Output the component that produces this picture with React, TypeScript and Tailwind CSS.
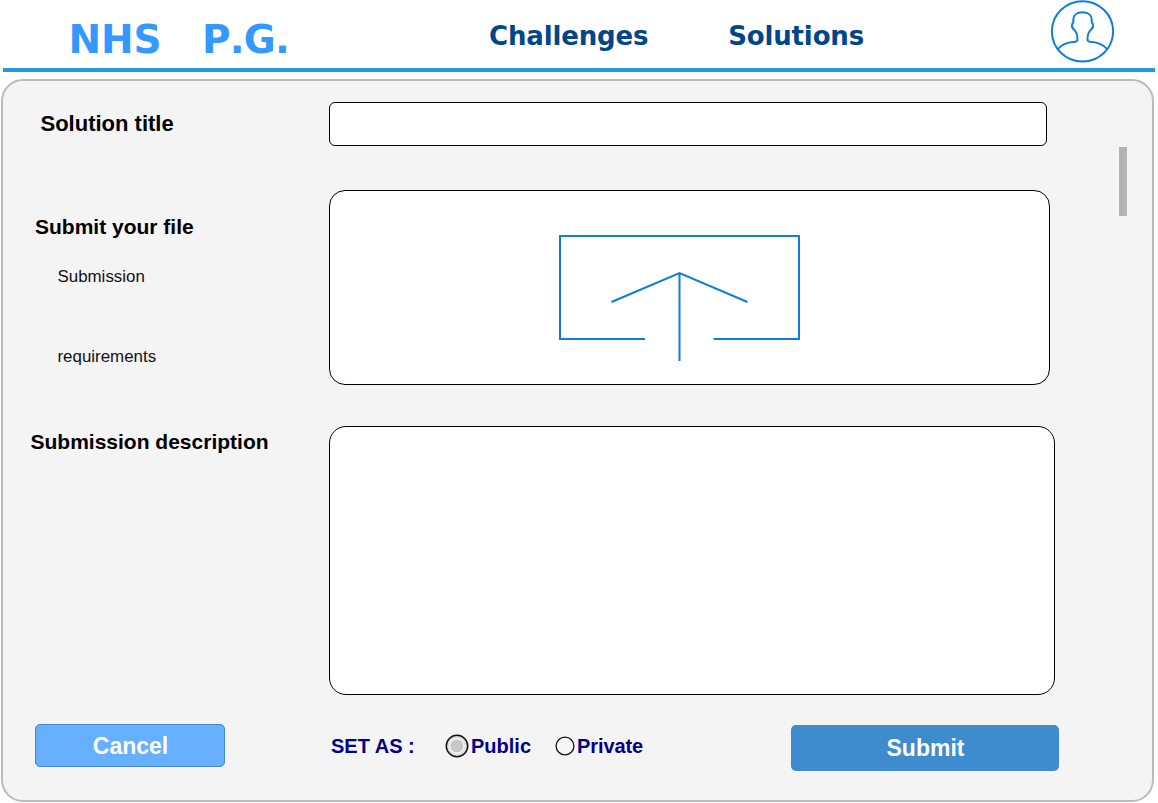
const stroke = "#0f7ddb";

function UserIcon() {
  return (
    <svg width="64" height="64" viewBox="0 0 64 64" fill="none" stroke={stroke} strokeWidth="2" strokeLinejoin="round">
      <ellipse cx="32.5" cy="31.4" rx="30.6" ry="30.2" />
      <path d="M7.8 49.2C11.500 44.500 18 42 25.5 41.7Q27.3 41.6 27.4 39.8V37C27.4 34 26.400 32.400 24.600 30.200C22.3 28.500 21.5 26 22.400 23.500L23.300 22.5V19.5C23.3 15 27 12.3 32.5 12.3C38 12.3 41.7 15 41.7 19.5V22.5L42.6 23.500C43.5 26 42.7 28.500 40.4 30.200C38.6 32.400 37.6 34 37.6 37V39.8Q37.7 41.6 39.5 41.7C47 42 53.500 44.500 57.2 49.2" />
    </svg>
  );
}

function UploadIcon() {
  return (
    <svg width="242" height="128" viewBox="0 0 242 128" fill="none" stroke={stroke} strokeWidth="2">
      <path d="M87 105H2V2H241V105H155.500" />
      <path d="M53.500 68L121.500 39L189.500 68M121.500 39V127" />
    </svg>
  );
}

function Header() {
  return (
    <header className="ml-[3px] flex h-[72px] w-[1152px] border-b-4 border-[#219bdc] font-['DejaVu_Sans',sans-serif] font-bold">
      <div className="w-[486px] whitespace-pre pl-[65.500px] pt-[17px] text-[39px] leading-[46px] tracking-[-0.100px] text-[#3399ff] [font-kerning:none]">NHS   <span className="tracking-[-0.800px]">P.G.</span></div>
      <nav className="flex grow gap-[80px] pt-[21px] text-[26px] leading-[30px] tracking-[-0.160px] text-[#004688]">
        <a>Challenges</a>
        <a>Solutions</a>
      </nav>
      <div className="w-[105px]">
        <UserIcon />
      </div>
    </header>
  );
}

export default function App() {
  return (
    <div className="h-[803px] w-[1158px] overflow-hidden bg-white font-['Liberation_Sans',Arial,sans-serif] text-black">
      <Header />
      <main className="ml-px mt-[7px] flex h-[723px] w-[1153px] rounded-[22px] border-2 border-[#bbbbbb] bg-[#f4f4f4]">
        <form className="flex w-[1116px] flex-col pt-[21px]" onSubmit={(e) => e.preventDefault()}>
          <div className="flex h-[88px]">
            <label className="w-[326px] pl-[37.500px] pt-[9px] text-[22px] font-bold leading-[26px]">Solution title</label>
            <input className="h-[44px] w-[718px] rounded-[6px] border border-black bg-white px-3" />
          </div>
          <div className="flex h-[236px]">
            <div className="w-[326px] pl-[32px] pt-[24px]">
              <h2 className="text-[21px] font-bold leading-[26px]">Submit your file</h2>
              <div className="flex flex-col gap-[60px] pl-[22.500px] pt-[27px] text-[16.900px] leading-[20px] text-[#111]">
                <p>Submission</p>
                <p>requirements</p>
              </div>
            </div>
            <div className="flex h-[195px] w-[721px] items-start rounded-[16px] border border-black bg-white pl-[228px] pt-[43px]">
              <UploadIcon />
            </div>
          </div>
          <div className="flex h-[298px]">
            <label className="w-[326px] pl-[27.500px] pt-[3px] text-[21px] font-bold leading-[26px]">Submission description</label>
            <textarea className="h-[269px] w-[726px] resize-none rounded-[17px] border border-black bg-white p-3" />
          </div>
          <div className="flex pl-[32px]">
            <button className="h-[43px] w-[190px] rounded-[5px] border border-[#4189c9] bg-[#66b0ff] pl-px pt-[2px] text-[23px] font-bold text-white">Cancel</button>
            <div className="flex h-[44px] w-[566px] items-center pl-[106px] text-[20px] font-bold text-[#000088]">
              <span className="w-[114px]">SET AS :</span>
              <span className="flex w-[110px] items-center gap-[2px]">
                <svg width="24" height="24" viewBox="0 0 24 24">
                  <circle cx="12" cy="12" r="10.700" fill="#e2e2e2" stroke="#111" strokeWidth="1.500" />
                  <circle cx="12" cy="12" r="7" fill="#c8c8c8" stroke="#fff" strokeWidth="1" />
                </svg>
                Public
              </span>
              <span className="flex items-center gap-[2px] tracking-[-0.100px]">
                <svg width="20" height="20" viewBox="0 0 20 20">
                  <circle cx="10" cy="10" r="8.900" fill="#f6f6f6" stroke="#111" strokeWidth="1.300" />
                </svg>
                Private
              </span>
            </div>
            <button className="mt-px h-[46px] w-[268px] rounded-[5px] bg-[#3e8bcd] pl-px text-[23px] font-bold text-white">Submit</button>
          </div>
        </form>
        <div className="pt-[66px]">
          <div className="h-[69px] w-[8px] bg-[#b3b3b3]" />
        </div>
      </main>
    </div>
  );
}
